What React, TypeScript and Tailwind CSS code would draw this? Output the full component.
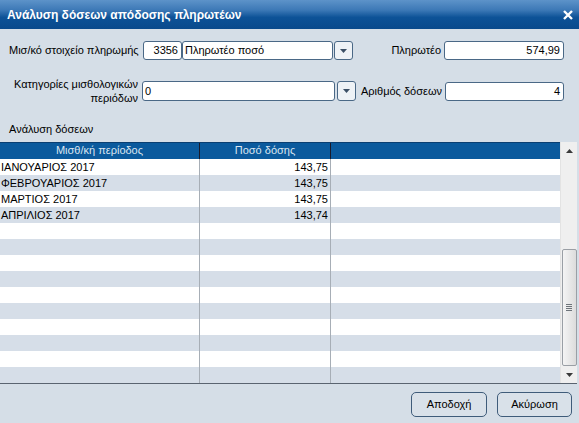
import React from "react";

const rows = [
  { p: "ΙΑΝΟΥΑΡΙΟΣ 2017", v: "143,75" },
  { p: "ΦΕΒΡΟΥΑΡΙΟΣ 2017", v: "143,75" },
  { p: "ΜΑΡΤΙΟΣ 2017", v: "143,75" },
  { p: "ΑΠΡΙΛΙΟΣ 2017", v: "143,74" },
];

function DropBtn({ h }: { h: string }) {
  return (
    <div className={`w-[19px] ${h} border border-[#4a6886] rounded-[3px] bg-[#eef2f6] flex items-center justify-center`}>
      <svg width="7" height="4" viewBox="0 0 7 4">
        <path d="M0 0 L7 0 L3.5 4 Z" fill="#3b4f66" />
      </svg>
    </div>
  );
}

export default function App() {
  const all = Array.from({ length: 14 }, (_, i) => rows[i] ?? { p: "", v: "" });
  return (
    <div
      className="w-[579px] h-[423px] bg-[#d5dee7] flex flex-col text-[11px] text-black overflow-hidden"
      style={{ fontFamily: '"Liberation Sans", Arial, sans-serif' }}
    >
      {/* Title bar */}
      <div className="h-[29px] shrink-0 bg-[linear-gradient(to_bottom,#5d93c9_0%,#3c78b6_35%,#0d5297_60%,#0a4a8c_100%)] flex items-center justify-between pl-[7px] pr-[6px]">
        <span className="text-white font-bold text-[12px]">Ανάλυση δόσεων απόδοσης πληρωτέων</span>
        <svg width="10" height="10" viewBox="0 0 10 10">
          <path d="M1 1 L9 9 M9 1 L1 9" stroke="white" strokeWidth="2.4" />
        </svg>
      </div>

      {/* Row 1 */}
      <div className="flex items-center h-[19px] mt-[12px] pl-[9px]">
        <div className="w-[134px] whitespace-nowrap">Μισ/κό στοιχείο πληρωμής</div>
        <div className="w-[39px] h-[19px] bg-white border border-[#4a6886] rounded-[3px] flex items-center justify-end pr-[3px]">3356</div>
        <div className="w-[151px] h-[19px] bg-white border border-[#4a6886] rounded-[3px] flex items-center pl-[2px]">Πληρωτέο ποσό</div>
        <div className="ml-[1px]"><DropBtn h="h-[19px]" /></div>
        <div className="w-[91px] text-right pr-[3px]">Πληρωτέο</div>
        <div className="w-[120px] h-[19px] bg-white border border-[#4a6886] rounded-[3px] flex items-center justify-end pr-[3px]">574,99</div>
      </div>

      {/* Row 2 */}
      <div className="flex items-center h-[20px] mt-[21px] pl-[9px]">
        <div className="w-[133px] text-right leading-[14px] pr-[4px]">
          Κατηγορίες μισθολογικών
          <br />
          περιόδων
        </div>
        <div className="w-[193px] h-[20px] bg-white border border-[#4a6886] rounded-[3px] flex items-center pl-[2px]">0</div>
        <div className="ml-[2px]"><DropBtn h="h-[20px]" /></div>
        <div className="w-[89px] text-right pr-[3px]">Αριθμός δόσεων</div>
        <div className="w-[119px] h-[19px] bg-white border border-[#4a6886] rounded-[3px] flex items-center justify-end pr-[3px]">4</div>
      </div>

      {/* Section label */}
      <div className="pl-[9px] mt-[20px] h-[21px] leading-[16px]">Ανάλυση δόσεων</div>

      {/* Grid */}
      <div className="flex h-[242px] border-b border-[#5a6470] mr-[2px]">
        <div className="w-[560px] flex flex-col">
          <div className="h-[17px] bg-[#0b5a9d] flex text-[#dbe6f1] border-t border-[#0a3f72]">
            <div className="w-[200px] border-r border-[#1a1a2a] text-center leading-[15px]">Μισθ/κή περίοδος</div>
            <div className="w-[131px] border-r border-[#1a1a2a] text-center leading-[15px]">Ποσό δόσης</div>
            <div className="flex-1" />
          </div>
          {all.map((r, i) => (
            <div key={i} className={`h-[16px] flex ${i % 2 === 0 ? "bg-white" : "bg-[#d6dee8]"}`}>
              <div className="w-[200px] border-r border-[#a7aeb6] pl-[1px] leading-[16px] whitespace-nowrap">{r.p}</div>
              <div className="w-[131px] border-r border-[#a7aeb6] text-right pr-[2px] leading-[16px]">{r.v}</div>
              <div className="flex-1" />
            </div>
          ))}
        </div>
        {/* Scrollbar */}
        <div className="w-[17px] bg-[#efefef] border-l border-[#e3e3e3] flex flex-col items-center">
          <div className="h-[17px] flex items-center justify-center">
            <svg width="7" height="4" viewBox="0 0 7 4"><path d="M0 4 L7 4 L3.5 0 Z" fill="#3a3a3a" /></svg>
          </div>
          <div className="h-[90px]" />
          <div className="w-[15px] h-[117px] rounded-[2px] border border-[#9a9fa5] bg-[linear-gradient(to_right,#f4f4f4,#dcdcdc)] flex items-center justify-center">
            <div className="flex flex-col gap-[1px]">
              <div className="w-[6px] h-[1px] bg-[#6e747a]" />
              <div className="w-[6px] h-[1px] bg-[#6e747a]" />
              <div className="w-[6px] h-[1px] bg-[#6e747a]" />
              <div className="w-[6px] h-[1px] bg-[#6e747a]" />
            </div>
          </div>
          <div className="flex-1 flex items-center justify-center">
            <svg width="7" height="4" viewBox="0 0 7 4"><path d="M0 0 L7 0 L3.5 4 Z" fill="#3a3a3a" /></svg>
          </div>
        </div>
      </div>

      {/* Buttons */}
      <div className="flex justify-end gap-[10px] pr-[7px] mt-[8px]">
        <div className="w-[76px] h-[25px] border border-[#3f5c7a] rounded-[5px] bg-[#d9e1e9] flex items-center justify-center">Αποδοχή</div>
        <div className="w-[75px] h-[25px] border border-[#3f5c7a] rounded-[5px] bg-[#d9e1e9] flex items-center justify-center">Ακύρωση</div>
      </div>
    </div>
  );
}
